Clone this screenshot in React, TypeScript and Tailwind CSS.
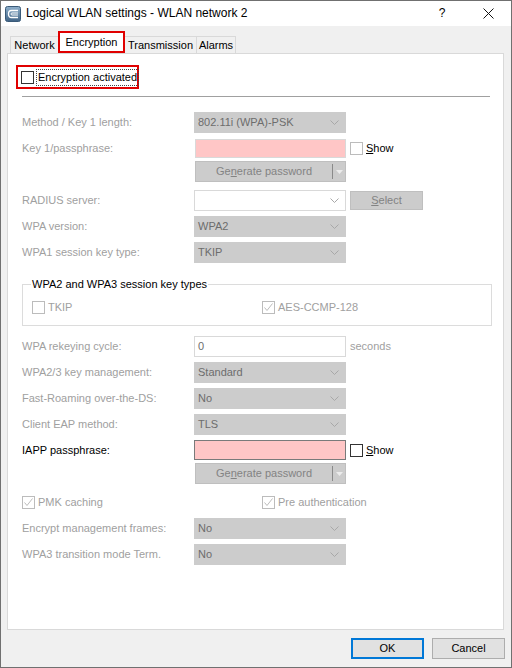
import React from "react";

const FONT = { fontFamily: '"Liberation Sans", Arial, sans-serif' };

function Chevron(): React.ReactElement {
  return (
    <svg width="9" height="5" viewBox="0 0 9 5" className="shrink-0">
      <polyline points="0.5,0.5 4.5,4.5 8.5,0.5" fill="none" stroke="#a8a8a8" strokeWidth="1" />
    </svg>
  );
}

function CheckBox({ checked, enabled }: { checked?: boolean; enabled?: boolean }): React.ReactElement {
  return (
    <span
      className={`flex h-[13px] w-[13px] shrink-0 items-center justify-center border bg-white ${
        enabled ? "border-[#333333]" : "border-[#bcbcbc]"
      }`}
    >
      {checked && (
        <svg width="11" height="11" viewBox="0 0 11 11">
          <polyline points="1.5,5.5 4,8.5 9.5,1.5" fill="none" stroke="#bcbcbc" strokeWidth="1" />
        </svg>
      )}
    </span>
  );
}

function Select({ value }: { value: string }): React.ReactElement {
  return (
    <div className="flex h-[21px] w-[152px] items-center justify-between border border-[#cccccc] bg-[#cccccc] pl-[3px] pr-[6px] text-[#6d6d6d]">
      <span>{value}</span>
      <Chevron />
    </div>
  );
}

function GenerateButton(): React.ReactElement {
  return (
    <div className="ml-[1px] flex h-[21px] w-[151px] items-center border border-[#bfbfbf] bg-[#cccccc] text-[#838383]">
      <span className="flex-1 text-center">
        Ge<u>n</u>erate password
      </span>
      <span className="h-[15px] w-px bg-[#8a8a8a]" />
      <span className="flex w-[12px] justify-center">
        <svg width="7" height="4" viewBox="0 0 7 4">
          <polygon points="0,0 7,0 3.5,4" fill="#ececec" />
        </svg>
      </span>
    </div>
  );
}

function Row({
  label,
  dark,
  top,
  children,
}: {
  label?: string;
  dark?: boolean;
  top?: boolean;
  children: React.ReactNode;
}): React.ReactElement {
  return (
    <div className={`flex h-[26px] ${top ? "items-start" : "items-center"}`}>
      <div className={`w-[172px] shrink-0 ${dark ? "text-black" : "text-[#a0a0a0]"}`}>{label}</div>
      {children}
    </div>
  );
}

function ShowBox({ enabled }: { enabled?: boolean }): React.ReactElement {
  return (
    <div className="ml-[4px] flex items-center gap-[3px] text-black">
      <CheckBox enabled={enabled} />
      <span>
        <u>S</u>how
      </span>
    </div>
  );
}

function AppIcon(): React.ReactElement {
  return (
    <svg width="16" height="16" viewBox="0 0 16 16">
      <defs>
        <linearGradient id="ic" x1="0" y1="0" x2="0" y2="1">
          <stop offset="0" stopColor="#8fb0cc" />
          <stop offset="1" stopColor="#3f6284" />
        </linearGradient>
      </defs>
      <rect x="0.5" y="0.5" width="15" height="15" rx="2" fill="url(#ic)" stroke="#3a5a78" />
      <path d="M13 4.5H6.5Q3.5 4.5 3.5 8Q3.5 11.5 6.5 11.5H13" fill="none" stroke="#fff" strokeWidth="1.3" />
      <path d="M13 7H7Q6 7 6 8Q6 9 7 9H13" fill="none" stroke="#fff" strokeWidth="1" />
    </svg>
  );
}

export default function App(): React.ReactElement {
  return (
    <div style={FONT} className="flex h-[668px] w-[512px] flex-col border border-[#707070] bg-[#f0f0f0] text-[11px] leading-[13px]">
      {/* title bar */}
      <div className="flex h-[25px] shrink-0 items-center bg-white">
        <div className="ml-[4px] flex w-[16px] items-center">
          <AppIcon />
        </div>
        <span className="ml-[5px] flex-1 text-[12px] text-black">Logical WLAN settings - WLAN network 2</span>
        <div className="flex h-full w-[46px] items-center justify-center text-[12px] text-black">?</div>
        <div className="flex h-full w-[46px] items-center justify-center">
          <svg width="11" height="11" viewBox="0 0 11 11">
            <path d="M0.5 0.5L10.5 10.5M10.5 0.5L0.5 10.5" stroke="#111" strokeWidth="1" />
          </svg>
        </div>
      </div>

      {/* tabs */}
      <div className="mt-[5px] flex h-[22px] items-end pl-[9px] text-black">
        <div className="flex h-[17px] w-[48px] items-center justify-center border-l border-t border-[#d9d9d9]">Network</div>
        <div className="flex h-[22px] w-[67px] items-center justify-center border-2 border-[#e00000] bg-white">Encryption</div>
        <div className="flex h-[17px] w-[71px] items-center justify-center border-t border-[#d9d9d9]">Transmission</div>
        <div className="flex h-[17px] w-[40px] items-center justify-center border-l border-r border-t border-[#d9d9d9]">Alarms</div>
      </div>

      {/* panel */}
      <div className="ml-[6px] h-[577px] w-[497px] shrink-0 border border-[#d9d9d9] bg-white">
        <div className="ml-[8px] mt-[11px] flex h-[24px] w-[123px] items-center whitespace-nowrap border-2 border-[#e00000] pl-[3px] text-black">
          <CheckBox enabled />
          <span className="ml-[2px] border border-dotted border-[#444] px-[1px] py-[1px]">Encryption activated</span>
        </div>
        <div className="ml-[14px] mt-[7px] h-px w-[468px] bg-[#a0a0a0]" />

        <div className="mt-[12px] pl-[14px]">
          <Row label="Method / Key 1 length:">
            <Select value="802.11i (WPA)-PSK" />
          </Row>
          <Row label="Key 1/passphrase:">
            <div className="ml-[1px] h-[19px] w-[151px] border border-[#d9d9d9] bg-[#ffc6c6]" />
            <ShowBox />
          </Row>
          <Row top>
            <GenerateButton />
          </Row>
          <Row label="RADIUS server:">
            <div className="flex h-[21px] w-[152px] items-center justify-end border border-[#d9d9d9] bg-white pr-[6px]">
              <Chevron />
            </div>
            <div className="ml-[4px] flex h-[19px] w-[73px] items-center justify-center border border-[#bfbfbf] bg-[#cccccc] text-[#838383]">
              <span>
                <u>S</u>elect
              </span>
            </div>
          </Row>
          <Row label="WPA version:">
            <Select value="WPA2" />
          </Row>
          <Row label="WPA1 session key type:">
            <Select value="TKIP" />
          </Row>

          <fieldset className="mt-[13px] w-[470px] border border-[#dcdcdc]">
            <legend className="ml-[8px] px-[1px] text-black">WPA2 and WPA3 session key types</legend>
            <div className="mb-[11px] mt-[10px] flex items-center pl-[9px] text-[#a0a0a0]">
              <div className="flex w-[230px] items-center gap-[3px]">
                <CheckBox />
                <span>TKIP</span>
              </div>
              <div className="flex items-center gap-[3px]">
                <CheckBox checked />
                <span>AES-CCMP-128</span>
              </div>
            </div>
          </fieldset>

          <div className="mt-[7px]">
            <Row label="WPA rekeying cycle:">
              <div className="flex h-[21px] w-[152px] items-center border border-[#d9d9d9] bg-white pl-[3px] text-[#6d6d6d]">0</div>
              <span className="ml-[4px] text-[#a0a0a0]">seconds</span>
            </Row>
            <Row label="WPA2/3 key management:">
              <Select value="Standard" />
            </Row>
            <Row label="Fast-Roaming over-the-DS:">
              <Select value="No" />
            </Row>
            <Row label="Client EAP method:">
              <Select value="TLS" />
            </Row>
            <Row label="IAPP passphrase:" dark>
              <div className="h-[20px] w-[152px] border border-[#7a7a7a] bg-[#ffc6c6]" />
              <ShowBox enabled />
            </Row>
            <Row top>
              <GenerateButton />
            </Row>
            <div className="flex h-[26px] items-center text-[#a0a0a0]">
              <div className="flex w-[240px] items-center gap-[3px]">
                <CheckBox checked />
                <span>PMK caching</span>
              </div>
              <div className="flex items-center gap-[3px]">
                <CheckBox checked />
                <span>Pre authentication</span>
              </div>
            </div>
            <Row label="Encrypt management frames:">
              <Select value="No" />
            </Row>
            <Row label="WPA3 transition mode Term.">
              <Select value="No" />
            </Row>
          </div>
        </div>
      </div>

      {/* buttons */}
      <div className="mt-[8px] flex justify-end gap-[8px] pr-[6px] text-black">
        <button type="button" className="h-[21px] w-[73px] border-2 border-[#0078d7] bg-[#e1e1e1]">
          OK
        </button>
        <button type="button" className="h-[21px] w-[73px] border border-[#adadad] bg-[#e1e1e1]">
          Cancel
        </button>
      </div>
    </div>
  );
}
